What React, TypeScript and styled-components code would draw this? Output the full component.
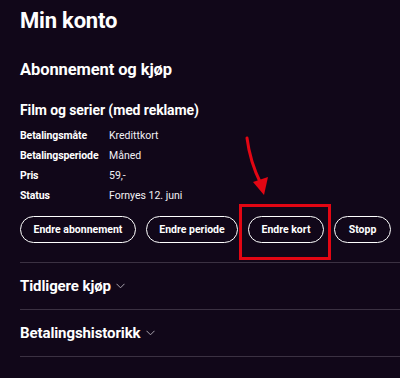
import styled, { createGlobalStyle } from "styled-components";

const GlobalStyle = createGlobalStyle`
  html, body {
    margin: 0;
    padding: 0;
    background: #110719;
  }
  body {
    font-family: Roboto, "Liberation Sans", sans-serif;
    color: #ffffff;
  }
`;

const Page = styled.div`
  position: relative;
  width: 400px;
  height: 378px;
  overflow: hidden;
  padding: 8px 0 0 20px;
  box-sizing: border-box;
`;

const Title = styled.h1`
  margin: 0;
  font-size: 22px;
  font-weight: 700;
  line-height: 26px;
  letter-spacing: -0.2px;
`;

const SectionTitle = styled.h2`
  margin: 26px 0 0;
  font-size: 16.5px;
  font-weight: 700;
  line-height: 20px;
  letter-spacing: -0.1px;
`;

const PlanTitle = styled.h3`
  margin: 21px 0 0;
  font-size: 14px;
  font-weight: 700;
  line-height: 18px;
  letter-spacing: -0.1px;
`;

const InfoGrid = styled.dl`
  display: grid;
  grid-template-columns: 89px auto;
  row-gap: 6px;
  margin: 10px 0 0;
  font-size: 10.5px;
  line-height: 14px;
`;

const Label = styled.dt`
  font-weight: 700;
  letter-spacing: -0.1px;
`;

const Value = styled.dd`
  margin: 0;
  font-weight: 400;
  color: #f2f0f4;
`;

const Actions = styled.div`
  display: flex;
  gap: 10px;
  margin-top: 13px;
  padding-bottom: 19px;
  border-bottom: 1px solid #3b3142;
`;

const PillButton = styled.button<{ $w: number }>`
  width: ${(p) => p.$w}px;
  height: 27px;
  padding: 0;
  border: 1.5px solid #ffffff;
  border-radius: 14px;
  background: transparent;
  color: #ffffff;
  font-family: inherit;
  font-size: 10.5px;
  font-weight: 700;
  white-space: nowrap;
  cursor: pointer;
`;

const Highlight = styled.div`
  position: relative;
`;

const RedBox = styled.div`
  position: absolute;
  left: -9px;
  top: -12px;
  width: 92px;
  height: 56px;
  border: 3px solid #e30613;
  box-sizing: border-box;
  pointer-events: none;
`;

const Arrow = styled.svg`
  position: absolute;
  left: 238px;
  top: 132px;
  pointer-events: none;
`;

const Accordion = styled.div`
  display: flex;
  align-items: center;
  gap: 5px;
  height: 46px;
  border-bottom: 1px solid #3b3142;
  font-size: 15px;
  font-weight: 700;
  letter-spacing: -0.1px;
`;

const Chevron = () => (
  <svg width="9" height="6" viewBox="0 0 9 6" fill="none">
    <path d="M0.5 0.8 L4.5 4.8 L8.5 0.8" stroke="#a9a3ad" strokeWidth="1" />
  </svg>
);

const rows = [
  ["Betalingsmåte", "Kredittkort"],
  ["Betalingsperiode", "Måned"],
  ["Pris", "59,-"],
  ["Status", "Fornyes 12. juni"],
];

export default function App() {
  return (
    <>
      <GlobalStyle />
      <Page>
        <Title>Min konto</Title>
        <SectionTitle>Abonnement og kjøp</SectionTitle>
        <PlanTitle>Film og serier (med reklame)</PlanTitle>
        <InfoGrid>
          {rows.map(([k, v]) => [
            <Label key={k}>{k}</Label>,
            <Value key={k + "v"}>{v}</Value>,
          ])}
        </InfoGrid>
        <Actions>
          <PillButton $w={116}>Endre abonnement</PillButton>
          <PillButton $w={92}>Endre periode</PillButton>
          <Highlight>
            <PillButton $w={76}>Endre kort</PillButton>
            <RedBox />
          </Highlight>
          <PillButton $w={57}>Stopp</PillButton>
        </Actions>
        <Accordion>
          Tidligere kjøp <Chevron />
        </Accordion>
        <Accordion>
          Betalingshistorikk <Chevron />
        </Accordion>
        <Arrow width="40" height="66" viewBox="0 0 40 66">
          <path d="M9 6 C11 22 15 36 23 52" stroke="#e30613" strokeWidth="3" fill="none" strokeLinecap="round" />
          <path d="M15 50 L30 45 L26 63 Z" fill="#e30613" />
        </Arrow>
      </Page>
    </>
  );
}
